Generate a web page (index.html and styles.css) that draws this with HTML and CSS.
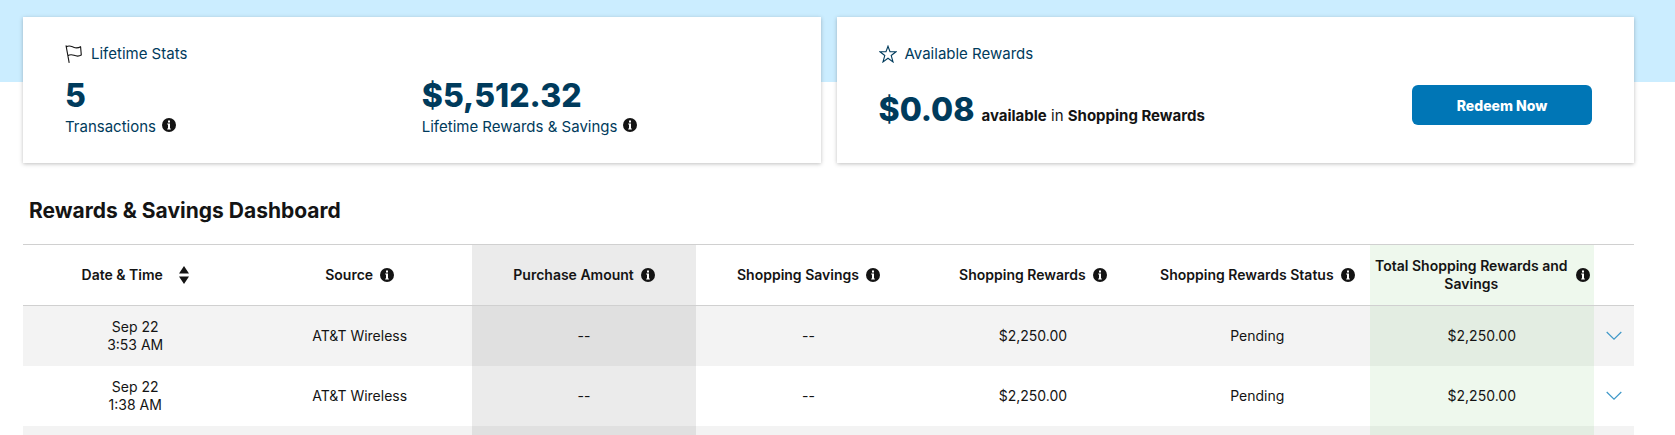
FILE: index.html
```html
<!DOCTYPE html>
<html lang="en">
<head>
    <meta charset="UTF-8">
    <meta name="viewport" content="width=device-width, initial-scale=1.0">
    <title>Rewards &amp; Savings</title>
    <link rel="stylesheet" href="styles.css">
</head>
<body>
    <!-- Shared icons -->
    <svg class="sprite" aria-hidden="true">
        <symbol id="info" viewBox="0 0 14 14">
            <circle cx="7" cy="7" r="7" fill="#141414"/>
            <path d="M6 2.500h2v2H6zM5.200 5.500H8v5h.8v1H5.200v-1H6v-4h-.8z" fill="#fff"/>
        </symbol>
        <symbol id="chevron" viewBox="0 0 16 10">
            <path d="M.7 1 8 8.200 15.300 1" fill="none" stroke="#3f98c8" stroke-width="1.200"/>
        </symbol>
    </svg>

    <main class="page">
        <div class="cards">
            <section class="card">
                <h2 class="card-title">
                    <svg class="card-icon" viewBox="0 0 18 18" fill="none" stroke="#141414" stroke-width="1.100" stroke-linejoin="round">
                        <path d="M1 .3 4.200 17.800M1.300 2C4-.2 6 1.200 8.500 2.200S13 3.200 15.600 1.700L16.300 10C13.500 11.800 11.500 11.300 9 10.300S5.300 9 2.800 10.800"/>
                    </svg>
                    Lifetime Stats
                </h2>
                <div class="stats">
                    <div class="stat">
                        <div class="amount">5</div>
                        <div class="stat-label">Transactions <button class="info" aria-label="About transactions"><svg><use href="#info"/></svg></button></div>
                    </div>
                    <div class="stat">
                        <div class="amount">$5,512.32</div>
                        <div class="stat-label">Lifetime Rewards &amp; Savings <button class="info" aria-label="About lifetime rewards"><svg><use href="#info"/></svg></button></div>
                    </div>
                </div>
            </section>

            <section class="card">
                <h2 class="card-title">
                    <svg class="card-icon" viewBox="0 0 18 18" fill="none" stroke="#003b5c" stroke-width="1.100">
                        <path d="M9 1.200 11 6.800H17L12.200 10.500 14 16.900 9 13.200 4 16.900 5.800 10.500 1 6.800H7Z"/>
                    </svg>
                    Available Rewards
                </h2>
                <div class="available">
                    <p class="balance"><span class="amount">$0.08</span><span><b>available</b> in <b>Shopping Rewards</b></span></p>
                    <button class="redeem">Redeem Now</button>
                </div>
            </section>
        </div>

        <h1 class="heading">Rewards &amp; Savings Dashboard</h1>

        <table class="dashboard">
            <colgroup>
                <col span="7">
                <col class="col-toggle">
            </colgroup>
            <thead>
                <tr>
                    <th><div class="th sortable">Date &amp; Time <button class="sort" aria-label="Sort by date"><svg viewBox="0 0 10 18"><path d="M5 0 10 7.500H0zM5 18 0 10.500H10z" fill="#141414"/></svg></button></div></th>
                    <th><div class="th">Source <button class="info" aria-label="About source"><svg><use href="#info"/></svg></button></div></th>
                    <th class="purchase"><div class="th">Purchase Amount <button class="info" aria-label="About purchase amount"><svg><use href="#info"/></svg></button></div></th>
                    <th><div class="th">Shopping Savings <button class="info" aria-label="About shopping savings"><svg><use href="#info"/></svg></button></div></th>
                    <th><div class="th">Shopping Rewards <button class="info" aria-label="About shopping rewards"><svg><use href="#info"/></svg></button></div></th>
                    <th><div class="th">Shopping Rewards Status <button class="info" aria-label="About rewards status"><svg><use href="#info"/></svg></button></div></th>
                    <th class="total"><div class="th">Total Shopping Rewards and Savings <button class="info" aria-label="About total"><svg><use href="#info"/></svg></button></div></th>
                    <th></th>
                </tr>
            </thead>
            <tbody>
                <tr>
                    <td>Sep 22<br>3:53 AM</td>
                    <td>AT&amp;T Wireless</td>
                    <td class="purchase">--</td>
                    <td>--</td>
                    <td>$2,250.00</td>
                    <td>Pending</td>
                    <td class="total">$2,250.00</td>
                    <td><button class="toggle" aria-label="Show details"><svg><use href="#chevron"/></svg></button></td>
                </tr>
                <tr>
                    <td>Sep 22<br>1:38 AM</td>
                    <td>AT&amp;T Wireless</td>
                    <td class="purchase">--</td>
                    <td>--</td>
                    <td>$2,250.00</td>
                    <td>Pending</td>
                    <td class="total">$2,250.00</td>
                    <td><button class="toggle" aria-label="Show details"><svg><use href="#chevron"/></svg></button></td>
                </tr>
                <tr>
                    <td></td>
                    <td></td>
                    <td class="purchase"></td>
                    <td></td>
                    <td></td>
                    <td></td>
                    <td class="total"></td>
                    <td></td>
                </tr>
            </tbody>
        </table>
    </main>
</body>
</html>
```

FILE: styles.css
```css
* {
    margin: 0;
    padding: 0;
    box-sizing: border-box;
}

body {
    background: #fff linear-gradient(#cbedff, #cbedff) no-repeat;
    background-size: 100% 82px;
    color: #141414;
    font-family: Inter, "Liberation Sans", sans-serif;
    font-size: 14px;
    line-height: 18px;
}

button {
    border: none;
    background: none;
    font-family: inherit;
    cursor: pointer;
}

svg {
    display: block;
}

.sprite {
    display: none;
}

.page {
    height: 100vh;
    overflow: hidden;
    padding: 17px 41px 0 23px;
}

/* Cards */
.cards {
    display: flex;
    gap: 16px;
}

.card {
    flex: 1;
    height: 146px;
    padding: 26px 42px;
    background: #fff;
    box-shadow: 0 1px 4px rgba(0, 0, 0, 0.25);
}

.card-title {
    display: flex;
    align-items: center;
    gap: 8px;
    color: #003b5c;
    font-size: 15px;
    font-weight: 400;
    line-height: 22px;
}

.card-icon {
    width: 18px;
    height: 18px;
}

.stats {
    display: flex;
    margin-top: 12px;
}

.stat {
    flex: 1;
}

.amount {
    color: #003b5c;
    font-size: 32px;
    font-weight: 800;
    line-height: 38px;
}

.stat-label {
    display: flex;
    align-items: flex-start;
    gap: 6px;
    color: #003b5c;
    font-size: 15px;
    line-height: 24px;
}

.stat-label .info {
    padding-top: 3px;
}

.info svg {
    width: 14px;
    height: 14px;
}

.available {
    display: flex;
    justify-content: space-between;
    align-items: center;
    margin-top: 16px;
}

.balance {
    display: flex;
    align-items: baseline;
    gap: 7px;
    padding-top: 10px;
    font-size: 15px;
}

.redeem {
    width: 180px;
    height: 40px;
    border-radius: 6px;
    background: #0076b6;
    color: #fff;
    font-size: 14px;
    font-weight: 800;
}

/* Dashboard */
.heading {
    padding: 0 6px;
    margin: 34px 0 19px;
    font-size: 21px;
    font-weight: 700;
    line-height: 28px;
}

.dashboard {
    width: 100%;
    table-layout: fixed;
    border-collapse: separate;
    border-spacing: 0;
    text-align: center;
}

.col-toggle {
    width: 40px;
}

.dashboard th {
    height: 62px;
    border-top: 1px solid #d0d0d0;
    border-bottom: 1px solid #d0d0d0;
    font-weight: 600;
}

.dashboard td {
    height: 60px;
}

.dashboard tbody tr:nth-child(odd) {
    background: #f3f3f3;
}

.th {
    display: flex;
    justify-content: center;
    align-items: center;
    gap: 7px;
    padding: 0 4px;
}

.sortable {
    gap: 16px;
}

.sort svg {
    width: 10px;
    height: 18px;
}

.purchase {
    background: rgba(0, 0, 0, 0.08);
}

.total {
    background: rgba(85, 185, 75, 0.1);
}

.toggle svg {
    width: 16px;
    height: 10px;
}
```
